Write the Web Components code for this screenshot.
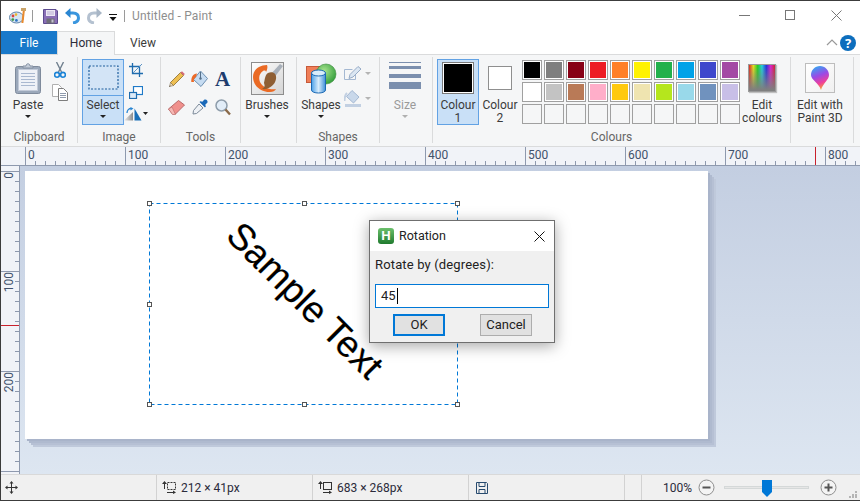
<!DOCTYPE html>
<html>
<head>
<meta charset="utf-8">
<title>Paint</title>
<style>
  html, body { margin: 0; padding: 0; background: #fff; }
</style>
</head>
<body>
<paint-app>
  <title-bar slot="title"></title-bar>
  <ribbon-tabs slot="tabs"></ribbon-tabs>
  <paint-ribbon slot="ribbon">
    <rb-group label="Clipboard" style="width:77px;padding-left:6px">
      <rb-big label="Paste" arrow><rb-icon name="paste"></rb-icon></rb-big>
      <rb-col style="width:22px">
        <rb-icon name="cut"></rb-icon>
        <rb-icon name="copy"></rb-icon>
      </rb-col>
    </rb-group>
    <rb-group label="Image" style="width:83px;padding-left:4px">
      <rb-big label="Select" arrow active split><rb-icon name="select"></rb-icon></rb-big>
      <rb-col style="width:24px">
        <rb-icon name="crop"></rb-icon>
        <rb-icon name="resize"></rb-icon>
        <rb-icon name="rotate"></rb-icon>
      </rb-col>
    </rb-group>
    <rb-group label="Tools" style="width:80px;padding-left:4px">
      <rb-tools>
        <rb-icon name="pencil"></rb-icon>
        <rb-icon name="fill"></rb-icon>
        <rb-icon name="textA"></rb-icon>
        <rb-icon name="eraser"></rb-icon>
        <rb-icon name="picker"></rb-icon>
        <rb-icon name="magnifier"></rb-icon>
      </rb-tools>
    </rb-group>
    <rb-group style="width:56px;padding-left:5px">
      <rb-big label="Brushes" arrow style="width:42px"><rb-icon name="brushes"></rb-icon></rb-big>
    </rb-group>
    <rb-group label="Shapes" style="width:83px;padding-left:3px">
      <rb-big label="Shapes" arrow><rb-icon name="shapes"></rb-icon></rb-big>
      <rb-col style="width:30px;padding-top:3px;gap:3px">
        <rb-icon name="outline"></rb-icon>
        <rb-icon name="shapefill"></rb-icon>
      </rb-col>
    </rb-group>
    <rb-group style="width:53px;padding-left:4px">
      <rb-big label="Size" arrow disabled><rb-icon name="size"></rb-icon></rb-big>
    </rb-group>
    <rb-group label="Colours" style="width:358px;padding-left:4px">
      <rb-big label="Colour&#10;1" active><rb-icon name="colour1"></rb-icon></rb-big>
      <rb-big label="Colour&#10;2"><rb-icon name="colour2"></rb-icon></rb-big>
      <rb-swatches></rb-swatches>
      <rb-big label="Edit&#10;colours"><rb-icon name="rainbow"></rb-icon></rb-big>
    </rb-group>
    <rb-group style="width:63px;padding-left:4px">
      <rb-big label="Edit with&#10;Paint 3D" style="width:50px"><rb-icon name="paint3d"></rb-icon></rb-big>
    </rb-group>
  </paint-ribbon>
  <paint-ruler slot="hruler" orient="h" marker="814"></paint-ruler>
  <paint-ruler slot="vruler" orient="v" marker="159"></paint-ruler>
  <paint-work slot="work">
    <paint-canvas>Sample Text</paint-canvas>
    <rotation-dialog></rotation-dialog>
  </paint-work>
  <status-bar slot="status"></status-bar>
</paint-app>

<script>
const ICONS = {
  paint: `<svg width="18" height="16" viewBox="0 0 18 16"><ellipse cx="7.5" cy="9.5" rx="7" ry="5.5" fill="#d5e4f2" stroke="#5f83a8"/><circle cx="4" cy="8" r="1.4" fill="#d8443c"/><circle cx="7" cy="6.6" r="1.3" fill="#e9b52f"/><circle cx="3.8" cy="11.6" r="1.4" fill="#3e9a4c"/><circle cx="7.4" cy="12.4" r="1.4" fill="#2d74c4"/><path d="M14 1l2 .5-1.6 13.5h-2z" fill="#e98a2d"/><path d="M12 0h5v3h-5z" fill="#c9a267"/></svg>`,
  save: `<svg width="15" height="15" viewBox="0 0 15 15"><path d="M.5.5h12.5l1.500 1.500v12.500h-14z" fill="#8a6fb6" stroke="#5c4a8e"/><rect x="3" y="1" width="9" height="6" fill="#ece8f4"/><path d="M4 3h7M4 5h7" stroke="#b9aed2"/><rect x="3.500" y="9.500" width="8" height="5" fill="#6f6f78"/><rect x="8.500" y="10.500" width="2" height="3" fill="#c6c3d2"/></svg>`,
  undo: `<svg width="15" height="16" viewBox="0 0 15 16"><path d="M3 5h5c4 0 5.500 2.500 5.500 5 0 2.500-2 4.500-5.500 5" fill="none" stroke="#3a96de" stroke-width="3"/><path d="M0 5l5.500-5v10z" fill="#2a86d2"/></svg>`,
  redo: `<svg width="15" height="16" viewBox="0 0 15 16"><g transform="matrix(-1 0 0 1 15 0)"><path d="M3 5h5c4 0 5.500 2.500 5.500 5 0 2.500-2 4.500-5.500 5" fill="none" stroke="#b4c1d0" stroke-width="3"/><path d="M0 5l5.500-5v10z" fill="#a8b6c6"/></g></svg>`,
  qat: `<svg width="8" height="7" viewBox="0 0 8 7"><path d="M0 .5h8" stroke="#111"/><path d="M.5 3h7L4 7z" fill="#111"/></svg>`,
  min: `<svg width="11" height="1"><path d="M0 .5h11" stroke="#777"/></svg>`,
  max: `<svg width="10" height="10"><rect x=".5" y=".5" width="9" height="9" fill="none" stroke="#777"/></svg>`,
  close: `<svg width="11" height="11"><path d="M.5.5l10 10M10.500.5l-10 10" stroke="#777"/></svg>`,
  chevron: `<svg width="12" height="7"><path d="M1 6l5-5 5 5" fill="none" stroke="#999" stroke-width="1.200"/></svg>`,
  paste: `<svg width="26" height="31" viewBox="0 0 26 31"><rect x=".5" y="3.500" width="25" height="27" rx="2" fill="#9ba8ba" stroke="#7f8b9c"/><rect x="3.500" y="6.500" width="19" height="21" fill="#eef1f7" stroke="#c2cad8"/><path d="M6 10.500h14M6 13.500h14M6 16.500h14M6 19.500h14M6 22.500h14" stroke="#a9b8d0"/><path d="M8 5V3h3c0-3 4-3 4 0h3v2z" fill="#c3ccd8" stroke="#8490a2"/></svg>`,
  cut: `<svg width="12" height="16" viewBox="0 0 12 16"><path d="M2.500 0l5 10M9.500 0l-5 10" stroke="#71808f" stroke-width="1.400"/><circle cx="3" cy="12.800" r="2.400" fill="none" stroke="#1b83d6" stroke-width="1.600"/><circle cx="9" cy="12.800" r="2.400" fill="none" stroke="#1b83d6" stroke-width="1.600"/></svg>`,
  copy: `<svg width="16" height="17" viewBox="0 0 16 17"><path d="M.5.500h6l3 3v9h-9z" fill="#fff" stroke="#b0b0b0"/><path d="M6.500 4.500h5l4 4v8h-9z" fill="#fff" stroke="#7d7d7d"/><path d="M8 9.500h6M8 11.500h6M8 13.500h6" stroke="#8f9bad"/></svg>`,
  select: `<svg width="31" height="25" viewBox="0 0 31 25"><rect x=".5" y=".5" width="30" height="24" fill="#d3e4f6"/><rect x="1" y="1" width="29" height="23" fill="none" stroke="#1c5c9c" stroke-width="1.200" stroke-dasharray="2 1.500"/></svg>`,
  crop: `<svg width="14" height="14" viewBox="0 0 14 14"><path d="M3.500 0v10.500H14M0 3.500h10.500V14" fill="none" stroke="#1f6cae" stroke-width="1.300"/><path d="M4 10L13 1" stroke="#5d93c4"/></svg>`,
  resize: `<svg width="14" height="13" viewBox="0 0 14 13"><rect x="4.500" y=".5" width="9" height="8" fill="#fff" stroke="#1f7ac8" stroke-width="1.200"/><rect x=".5" y="6.500" width="7" height="6" fill="#dcebf9" stroke="#1f6cae" stroke-width="1.200"/></svg>`,
  rotate: `<svg width="24" height="14" viewBox="0 0 24 14"><defs><linearGradient id="rg" x1="0" x2="1"><stop offset="0" stop-color="#eee"/><stop offset="1" stop-color="#8d8d8d"/></linearGradient></defs><path d="M0 13.500L9 5v8.500z" fill="url(#rg)"/><path d="M10.500 1.500l7 12h-7z" fill="#1a6fb8"/><path d="M3 6c0-3 2-4.500 4-4.500" fill="none" stroke="#2a86d2" stroke-width="1.300"/><path d="M6.500 0l3 1.500-3 2z" fill="#2a86d2"/><path d="M19 5h5l-2.500 3z" fill="#222"/></svg>`,
  pencil: `<svg width="16" height="16" viewBox="0 0 16 16"><path d="M11.500 1.500l3 3L4.500 14.500l-3-3z" fill="#eebf52" stroke="#8a6a2a" stroke-width=".8"/><path d="M1.500 11.500l3 3L0.500 15.500z" fill="#f2dcb4" stroke="#6e5a3a" stroke-width=".5"/><path d="M11.500 1.500l1.500-1.300 2.800 2.800-1.300 1.500z" fill="#d66a78"/><path d="M0 16l1.500-1 -.5-.5z" fill="#222"/></svg>`,
  fill: `<svg width="17" height="16" viewBox="0 0 17 16"><path d="M9.500 0l7 7.500-6.500 8-7.500-7z" fill="#c6dcf2" stroke="#6d8fb0"/><path d="M9.500 1v6" stroke="#55708a"/><circle cx="9.500" cy="7.500" r="1.200" fill="#55708a"/><path d="M6 2.500C2 3 0 6 .3 11l2.700 0c-.5-2 0-4 2-5z" fill="#ec6a28"/></svg>`,
  textA: `<span style="display:block;font:bold 21px/16px 'Liberation Serif',serif;color:#1d3c6e">A</span>`,
  eraser: `<svg width="17" height="15" viewBox="0 0 17 15"><path d="M.5 9L10.500.5l6 4.500-9 9h-3z" fill="#f0908c" stroke="#b86a6a"/><path d="M.5 9l4 5.500h3L4 7z" fill="#f6b8b4" stroke="#b86a6a" stroke-width=".6"/></svg>`,
  picker: `<svg width="16" height="16" viewBox="0 0 16 16"><path d="M7 5L1.500 11.500 1 15l3.500-.5L11 9z" fill="#eef1f5" stroke="#7d8b9a"/><path d="M7.500 3l5.500 5.500 1-1.500-1-1 2.500-2.500c.5-2-1-3.500-3-3L10 3 9 2z" fill="#1a69b8"/></svg>`,
  magnifier: `<svg width="16" height="17" viewBox="0 0 16 17"><circle cx="6.500" cy="6.500" r="5.500" fill="#e2edf8" stroke="#8e9dab" stroke-width="1.500"/><path d="M10.500 10.500l4.500 5" stroke="#8a6a4a" stroke-width="2.400"/></svg>`,
  brushes: `<svg width="33" height="33" viewBox="0 0 33 33"><defs><linearGradient id="bb" x1="0" y1="0" x2="1" y2="1"><stop offset="0" stop-color="#fff"/><stop offset="1" stop-color="#d4d4d4"/></linearGradient></defs><rect x=".5" y=".5" width="32" height="32" fill="url(#bb)" stroke="#8d8d8d"/><path d="M16 3C8 3 2 8 2 15c0 8 7 15 17 15 3 0 5-1 6-3-6 1-13-1-16-7-2-5 0-9 3-11 2-1 3 0 3 1 1-2 2-5 1-7z" fill="#ea6a24"/><path d="M29 2l3 2-9 12-4-3z" fill="#a8b0ba"/><path d="M17 11c5-2 9 1 8 6-1 6-7 11-14 10 3-2 3-3 2-6 1-4 1-8 4-10z" fill="#8f5f34"/></svg>`,
  shapes: `<svg width="31" height="31" viewBox="0 0 31 31"><defs><radialGradient id="gc" cx=".4" cy=".35" r=".7"><stop offset="0" stop-color="#a9e58f"/><stop offset="1" stop-color="#2f9b3a"/></radialGradient><linearGradient id="cy" x1="0" x2="1"><stop offset="0" stop-color="#4ca0e8"/><stop offset=".5" stop-color="#d8ecfb"/><stop offset="1" stop-color="#3f8fd8"/></linearGradient></defs><rect x=".5" y="3.500" width="18" height="16" fill="#f07f58" stroke="#c65a3a"/><circle cx="20" cy="11" r="10" fill="url(#gc)" stroke="#3a8a3a" stroke-width=".6"/><path d="M5.500 10v17c0 4 14 4 14 0V10z" fill="url(#cy)" stroke="#1b69b4"/><ellipse cx="12.500" cy="10" rx="7" ry="3" fill="#d9edfb" stroke="#1b69b4"/></svg>`,
  outline: `<span style="display:flex;gap:3px;align-items:center"><svg width="18" height="14" viewBox="0 0 18 14"><path d="M.5 3.500h8M.5 3.500v10h11V8" fill="none" stroke="#a4b8d2"/><path d="M14 .5l3 2.500-8 8-4 1.500 1-4z" fill="#dbe6f2" stroke="#96abc6"/></svg><svg width="6" height="3"><path d="M0 0h6L3 3z" fill="#b4b4b4"/></svg></span>`,
  shapefill: `<span style="display:flex;gap:3px;align-items:center"><svg width="18" height="17" viewBox="0 0 18 17"><path d="M8 .5l7 6.500-5.500 6-7-6.500z" fill="#c9d8ea" stroke="#a4b8d2"/><path d="M1 15.500h16" stroke="#c2d0e2" stroke-width="3"/><path d="M3 3C1 5 .5 8 .5 11" stroke="#c2d0e2" stroke-width="2" fill="none"/></svg><svg width="6" height="3"><path d="M0 0h6L3 3z" fill="#b4b4b4"/></svg></span>`,
  size: `<span style="display:flex;flex-direction:column;width:32px;height:27px;margin-top:-6px"><i style="height:1px;background:#7b8fae;margin-top:0"></i><i style="height:3px;background:#7b8fae;margin-top:3px"></i><i style="height:4px;background:#7b8fae;margin-top:5px"></i><i style="height:7px;background:#7b8fae;margin-top:4px"></i></span>`,
  colour1: `<span style="display:block;width:32px;height:32px;box-sizing:border-box;border:1px solid #7a7a7a;padding:1px;background:#fff"><i style="display:block;height:100%;background:#000"></i></span>`,
  colour2: `<span style="display:block;width:24px;height:24px;box-sizing:border-box;border:1px solid #8f8f8f;background:#fff"></span>`,
  rainbow: `<span style="display:block;width:28px;height:28px;box-sizing:border-box;border:1px solid #9a9a9a;box-shadow:1px 1px 1px #c0c0c0;background:linear-gradient(rgba(128,128,128,0),#7f7f7f 95%),linear-gradient(90deg,#e02020,#e8e020,#20d020,#20d0e0,#2030e0,#e020d0,#d02030)"></span>`,
  paint3d: `<span style="display:flex;justify-content:center;align-items:center;width:30px;height:30px;box-sizing:border-box;border:1px solid #bdbdbd;background:linear-gradient(135deg,#fff,#f0f0f0)"><svg width="18" height="24" viewBox="0 0 18 24"><defs><linearGradient id="pb" x1=".3" y1="0" x2=".6" y2="1"><stop offset="0" stop-color="#35a6f2"/><stop offset=".4" stop-color="#9a4ae6"/><stop offset=".72" stop-color="#f0409a"/><stop offset="1" stop-color="#f6b024"/></linearGradient></defs><path d="M9 0c5 0 9 4 9 9 0 5-6 8-8 15C8 17 0 14 0 9c0-5 4-9 9-9z" fill="url(#pb)"/></svg></span>`,
  move: `<svg width="13" height="13" viewBox="0 0 13 13"><path d="M6.500 1v11M1 6.500h11" stroke="#333"/><path d="M6.500 0l2 2.500h-4zM6.500 13l2-2.500h-4zM0 6.500l2.500-2v4zM13 6.500l-2.500-2v4z" fill="#333"/></svg>`,
  stSelect: `<svg width="14" height="13" viewBox="0 0 14 13"><rect x="5.500" y="1.500" width="8" height="7" fill="none" stroke="#333" stroke-dasharray="2 1"/><path d="M2.500 1v7M5 11.500h8" stroke="#333"/><path d="M0 3l2.500-3L5 3zM11 9.500l3 2-3 1.500z" fill="#333"/></svg>`,
  stCanvas: `<svg width="14" height="13" viewBox="0 0 14 13"><rect x="5.500" y="1.500" width="8" height="7" fill="none" stroke="#333"/><path d="M2.500 1v7M5 11.500h8" stroke="#333"/><path d="M0 3l2.500-3L5 3zM11 9.500l3 2-3 1.500z" fill="#333"/></svg>`,
  stSave: `<svg width="12" height="12" viewBox="0 0 12 12"><path d="M.5.5h10l1 1v10H.5z" fill="none" stroke="#274a6e"/><path d="M3 1v3.500h6V1M3 11V7.500h6V11" fill="none" stroke="#274a6e"/></svg>`,
  zoomOut: `<svg width="17" height="17" viewBox="0 0 17 17"><circle cx="8.500" cy="8.500" r="7.500" fill="#f4f4f4" stroke="#8e8e8e"/><path d="M4.500 8.500h8" stroke="#555" stroke-width="2"/></svg>`,
  zoomIn: `<svg width="17" height="17" viewBox="0 0 17 17"><circle cx="8.500" cy="8.500" r="7.500" fill="#f4f4f4" stroke="#8e8e8e"/><path d="M4.500 8.500h8M8.500 4.500v8" stroke="#555" stroke-width="2"/></svg>`,
  thumb: `<svg width="10" height="17" viewBox="0 0 10 17"><path d="M0 0h10v12l-5 5-5-5z" fill="#0078d7"/></svg>`,
  grip: `<svg width="9" height="7" viewBox="0 0 9 7"><path d="M6 0h2v2H6zM3 3h2v2H3zM6 3h2v2H6zM0 5h2v2H0zM3 5h2v2H3zM6 5h2v2H6z" fill="#b4b4b4"/></svg>`
};

class ShadowEl extends HTMLElement {
  constructor(css, html) {
    super();
    this.attachShadow({ mode: 'open' });
    this.shadowRoot.innerHTML = `<style>${css}</style>${html}`;
  }
}

class RbIcon extends HTMLElement {
  connectedCallback() {
    if (this.shadowRoot) return;
    this.attachShadow({ mode: 'open' });
    this.shadowRoot.innerHTML = `<style>:host{display:flex;align-items:center;justify-content:center;line-height:0}</style>` + ICONS[this.getAttribute('name')];
  }
}
customElements.define('rb-icon', RbIcon);

class PaintApp extends ShadowEl {
  constructor() {
    super(`
      :host { display:flex; flex-direction:column; width:860px; height:501px; box-sizing:border-box; overflow:hidden;
        border:1px solid #3c3c3c; border-right:0; font:12px/16px Roboto,sans-serif; color:#3b3b3b; background:#fff; }
      #mid { display:flex; flex:1; min-height:0; }
    `, `
      <slot name="title"></slot>
      <slot name="tabs"></slot>
      <slot name="ribbon"></slot>
      <slot name="hruler"></slot>
      <div id="mid"><slot name="vruler"></slot><slot name="work"></slot></div>
      <slot name="status"></slot>
    `);
  }
}
customElements.define('paint-app', PaintApp);

class TitleBar extends ShadowEl {
  constructor() {
    super(`
      :host { display:flex; align-items:center; height:30px; padding-left:8px; background:#fff; }
      rb-icon { flex:none; }
      .sep { width:1px; height:12px; background:#9a9a9a; flex:none; }
      #name { margin-left:7px; color:#8e8e8e; flex:1; letter-spacing:.15px; }
      #ctl { display:flex; align-self:stretch; padding-right:1px; }
      #ctl rb-icon { width:46px; padding-bottom:2px; }
    `, `
      <rb-icon name="paint"></rb-icon>
      <span class="sep" style="margin-left:5px"></span>
      <rb-icon name="save" style="margin-left:10px"></rb-icon>
      <rb-icon name="undo" style="margin-left:7px"></rb-icon>
      <rb-icon name="redo" style="margin-left:7px"></rb-icon>
      <rb-icon name="qat" style="margin-left:7px;margin-top:2px"></rb-icon>
      <span class="sep" style="margin-left:7px"></span>
      <span id="name">Untitled - Paint</span>
      <div id="ctl">
        <rb-icon name="min"></rb-icon>
        <rb-icon name="max"></rb-icon>
        <rb-icon name="close"></rb-icon>
      </div>
    `);
  }
}
customElements.define('title-bar', TitleBar);

class RibbonTabs extends ShadowEl {
  constructor() {
    super(`
      :host { display:flex; height:24px; box-sizing:border-box; border-bottom:1px solid #dadbdc; background:#fff; align-items:stretch; }
      .tab { width:56px; box-sizing:border-box; text-align:center; line-height:24px; height:23px; }
      #file { width:56px; background:#1979ca; color:#fff; }
      #home { width:58px; height:24px; background:#f5f6f7; border:1px solid #dadbdc; border-bottom:0; line-height:22px; color:#2d2d3a; }
      #right { margin-left:auto; display:flex; align-items:center; gap:2px; padding-right:4px; }
      #help { width:16px; height:16px; border-radius:50%; background:#0d6ebd; color:#fff; font:bold 13px/16px "Noto Sans",sans-serif; text-align:center; }
    `, `
      <div class="tab" id="file">File</div>
      <div class="tab" id="home">Home</div>
      <div class="tab" id="view">View</div>
      <div id="right"><rb-icon name="chevron"></rb-icon><div id="help">?</div></div>
    `);
  }
}
customElements.define('ribbon-tabs', RibbonTabs);

class PaintRibbon extends ShadowEl {
  constructor() {
    super(`:host { display:flex; height:92px; box-sizing:border-box; border-bottom:1px solid #dadbdc; background:#f5f6f7; padding-top:2px; }`, `<slot></slot>`);
  }
}
customElements.define('paint-ribbon', PaintRibbon);

class RbGroup extends HTMLElement {
  connectedCallback() {
    if (this.shadowRoot) return;
    this.attachShadow({ mode: 'open' });
    this.shadowRoot.innerHTML = `
      <style>
        :host { display:flex; flex-direction:column; height:86px; box-sizing:border-box; border-right:1px solid #dadbdc; flex:none; position:relative; }
        #c { display:flex; flex:1; padding-top:2px; align-items:flex-start; }
        #l { height:14px; line-height:14px; color:#666; text-align:center; position:absolute; left:0; right:0; bottom:-1px; }
      </style>
      <div id="c"><slot></slot></div>
      <div id="l">${this.getAttribute('label') || ''}</div>`;
  }
}
customElements.define('rb-group', RbGroup);

class RbBig extends HTMLElement {
  connectedCallback() {
    if (this.shadowRoot) return;
    this.attachShadow({ mode: 'open' });
    const label = (this.getAttribute('label') || '').split('\n').map(s => `<div>${s}</div>`).join('');
    this.shadowRoot.innerHTML = `
      <style>
        :host { display:flex; flex-direction:column; width:42px; height:66px; box-sizing:border-box; border:1px solid transparent; align-items:center; flex:none; }
        :host([active]) { background:#c9e0f7; border-color:#62a2e4; }
        :host([disabled]) { color:#9a9a9a; }
        #i { height:36px; align-self:stretch; display:flex; align-items:center; justify-content:center; box-sizing:border-box; flex:none; }
        :host([split]) #i { border-bottom:1px solid #62a2e4; }
        #t { padding-top:3px; line-height:13px; text-align:center; white-space:nowrap; }
        #a { display:none; margin-top:3px; width:0; height:0; border:3px solid transparent; border-top-color:#222; border-bottom:0; }
        :host([arrow]) #a { display:block; }
        :host([disabled]) #a { border-top-color:#b0b0b0; }
      </style>
      <div id="i"><slot></slot></div>
      <div id="t">${label}</div>
      <div id="a"></div>`;
  }
}
customElements.define('rb-big', RbBig);

class RbCol extends ShadowEl {
  constructor() {
    super(`:host { display:flex; flex-direction:column; flex:none; }
      ::slotted(rb-icon) { height:22px; justify-content:center; }`, `<slot></slot>`);
  }
}
customElements.define('rb-col', RbCol);

class RbTools extends ShadowEl {
  constructor() {
    super(`:host { display:grid; grid-template-columns:repeat(3,23px); grid-auto-rows:28px; padding-top:6px; flex:none; }`, `<slot></slot>`);
  }
}
customElements.define('rb-tools', RbTools);

class RbSwatches extends HTMLElement {
  constructor() {
    super();
    this.attachShadow({ mode: 'open' });
    const colours = ['#000000','#7f7f7f','#880015','#ed1c24','#ff7f27','#fff200','#22b14c','#00a2e8','#3f48cc','#a349a4',
      '#ffffff','#c3c3c3','#b97a57','#ffaec9','#ffc90e','#efe4b0','#b5e61d','#99d9ea','#7092be','#c8bfe7'];
    const cells = colours.map(c => `<i style="background:${c}"></i>`).join('') + '<b></b>'.repeat(10);
    this.shadowRoot.innerHTML = `
      <style>
        :host { display:grid; grid-template-columns:repeat(10,20px); grid-auto-rows:20px; gap:2px; margin:1px 1px 0 1px; flex:none; }
        i, b { display:block; box-sizing:border-box; border:1px solid #a0a0a0; }
        i { box-shadow:inset 0 0 0 1px #fff; }
        b { background:#f5f6f7; }
      </style>${cells}`;
  }
}
customElements.define('rb-swatches', RbSwatches);

class PaintRuler extends HTMLElement {
  connectedCallback() {
    if (this.shadowRoot) return;
    this.attachShadow({ mode: 'open' });
    const h = this.getAttribute('orient') === 'h';
    let marks = '';
    // the fourth mark on the left ruler sits under the status bar, only its tick shows
    if (h) for (let i = 0; i < 9; i++) marks += `<div class="m"><span>${i * 100}</span></div>`;
    else for (let i = 0; i < 4; i++) marks += `<div class="m">${i < 3 ? `<span>${i * 100}</span>` : ''}</div>`;
    const line = '#8e99ae';
    this.shadowRoot.innerHTML = `
      <style>
        :host { display:flex; box-sizing:border-box; background:#f1f3f8; color:#42526b; position:relative; overflow:hidden; flex:none; }
        :host([orient=h]) { height:19px; padding-left:24px; border-bottom:1px solid ${line}; }
        :host([orient=v]) { flex-direction:column; padding-top:5px; border-right:1px solid ${line}; box-sizing:content-box; width:18px; }
        .m { flex:none; box-sizing:border-box; }
        :host([orient=h]) .m { width:100px; padding-left:3px; line-height:17px;
          background:linear-gradient(${line},${line}) 0 0/1px 100% no-repeat,
            repeating-linear-gradient(90deg,${line} 0 1px,transparent 1px 10px) 0 100%/100% 4px no-repeat; }
        :host([orient=v]) .m { height:100px; padding-top:1px; display:flex; justify-content:center;
          background:linear-gradient(${line},${line}) 0 0/100% 1px no-repeat,
            repeating-linear-gradient(180deg,${line} 0 1px,transparent 1px 10px) 100% 0/4px 100% no-repeat; }
        :host([orient=v]) span { writing-mode:vertical-rl; transform:rotate(180deg); align-self:flex-start; line-height:16px; margin-right:2px; }
        #k { position:absolute; background:#c8202c; }
        :host([orient=h]) #k { top:0; bottom:0; width:1px; left:${this.getAttribute('marker')}px; }
        :host([orient=v]) #k { left:0; right:0; height:1px; top:${this.getAttribute('marker')}px; }
      </style>${marks}<div id="k"></div>`;
  }
}
customElements.define('paint-ruler', PaintRuler);

class PaintWork extends ShadowEl {
  constructor() {
    super(`:host { display:block; flex:1; position:relative; box-sizing:border-box; padding:5px 0 0 5px; overflow:hidden; height:100%;
      background:linear-gradient(#c3cee1,#dde6f1 100%); }`, `<slot></slot>`);
  }
}
customElements.define('paint-work', PaintWork);

class PaintCanvas extends ShadowEl {
  constructor() {
    super(`
      :host { display:block; position:relative; width:683px; height:268px; background:#fff;
        box-shadow:2px 2px 0 #a9b4ca,4px 4px 0 #afbacf,6px 6px 0 #b6c0d4,8px 8px 0 #bfc9db; }
      #text { position:absolute; left:174px; top:109px; width:212px; height:41px; white-space:nowrap;
        font:37px/41px "Liberation Sans",Arial,sans-serif; color:#000; text-align:center;
        transform:rotate(45deg); text-shadow:-.3px .3px 0 rgba(255,150,0,.55),.3px -.3px 0 rgba(0,160,255,.55); }
      svg { position:absolute; left:120px; top:28px; }
    `, `
      <div id="text"><slot></slot></div>
      <svg width="320" height="212" viewBox="120 28 320 212">
        <rect x="124.500" y="32.500" width="308" height="201" fill="none" stroke="#0078d7" stroke-dasharray="4 3"/>
        <g fill="#fff" stroke="#555">
          <rect x="122.500" y="30.500" width="4" height="4"/><rect x="277.500" y="30.500" width="4" height="4"/><rect x="430.500" y="30.500" width="4" height="4"/>
          <rect x="122.500" y="131.500" width="4" height="4"/><rect x="430.500" y="131.500" width="4" height="4"/>
          <rect x="122.500" y="231.500" width="4" height="4"/><rect x="277.500" y="231.500" width="4" height="4"/><rect x="430.500" y="231.500" width="4" height="4"/>
        </g>
      </svg>
    `);
  }
}
customElements.define('paint-canvas', PaintCanvas);

class RotationDialog extends ShadowEl {
  constructor() {
    super(`
      :host { position:absolute; left:349px; top:54px; width:186px; height:123px; box-sizing:border-box; display:flex; flex-direction:column;
        border:1px solid #6f6f6f; background:#f0f0f0; box-shadow:0 3px 14px rgba(0,0,0,.35); color:#222; font-size:13px; }
      #bar { height:30px; background:#fff; display:flex; align-items:center; padding:0 9px 0 8px; flex:none; }
      #h { width:16px; height:16px; border-radius:3px; background:linear-gradient(#6cc06c,#1f7a2e); color:#fff; font:bold 13px/16px "Liberation Sans",sans-serif; text-align:center; }
      #cap { margin-left:5px; flex:1; font-size:12.5px; }
      #body { display:flex; flex-direction:column; padding:6px 5px; }
      #rot { letter-spacing:.15px; }
      #edit { margin-top:11px; height:24px; box-sizing:border-box; border:1px solid #0078d7; background:#fff; padding-left:5px; display:flex; align-items:center; }
      #caret { width:1px; height:16px; background:#000; margin-left:1px; }
      #btns { display:flex; gap:35px; margin:6px 0 0 18px; }
      .b { width:52px; height:22px; box-sizing:border-box; background:#e1e1e1; border:1px solid #adadad; text-align:center; line-height:20px; }
      .b.d { border:2px solid #0078d7; line-height:18px; }
    `, `
      <div id="bar"><span id="h">H</span><span id="cap">Rotation</span>
        <svg width="11" height="11"><path d="M.5.5l10 10M10.500.5l-10 10" stroke="#111"/></svg></div>
      <div id="body">
        <div id="rot">Rotate by (degrees):</div>
        <div id="edit">45<span id="caret"></span></div>
        <div id="btns"><div class="b d">OK</div><div class="b">Cancel</div></div>
      </div>
    `);
  }
}
customElements.define('rotation-dialog', RotationDialog);

class StatusBar extends ShadowEl {
  constructor() {
    super(`
      :host { display:flex; height:26px; box-sizing:border-box; flex:none; border-top:1px solid #d9d9d9; background:#f0f0f0; color:#2b2b3b; }
      .c { width:156px; box-sizing:border-box; border-right:1px solid #d2d2d2; display:flex; align-items:center; flex:none; padding-left:5px; }
      .c span { margin-left:5px; }
      #z { flex:1; border:0; padding-left:21px; position:relative; }
      #z span { margin:0; width:28px; flex:none; white-space:nowrap; }
      #track { width:85px; height:3px; box-sizing:border-box; border:1px solid #d4d8d8; background:#e6e6e6; margin:-1px 11px 0 9px; position:relative; flex:none; }
      #thumb { position:absolute; left:37px; top:-7px; }
      #grip { position:absolute; right:2px; bottom:2px; }
    `, `
      <div class="c" style="padding-left:4px"><rb-icon name="move"></rb-icon></div>
      <div class="c"><rb-icon name="stSelect"></rb-icon><span>212 × 41px</span></div>
      <div class="c"><rb-icon name="stCanvas"></rb-icon><span>683 × 268px</span></div>
      <div class="c" style="padding-left:7px"><rb-icon name="stSave"></rb-icon></div>
      <div class="c" style="width:17px"></div>
      <div class="c" id="z"><span>100%</span><rb-icon name="zoomOut" style="margin-left:7px"></rb-icon>
        <div id="track"><rb-icon id="thumb" name="thumb"></rb-icon></div>
        <rb-icon name="zoomIn"></rb-icon>
        <rb-icon id="grip" name="grip"></rb-icon></div>
    `);
  }
}
customElements.define('status-bar', StatusBar);
</script>
</body>
</html>
